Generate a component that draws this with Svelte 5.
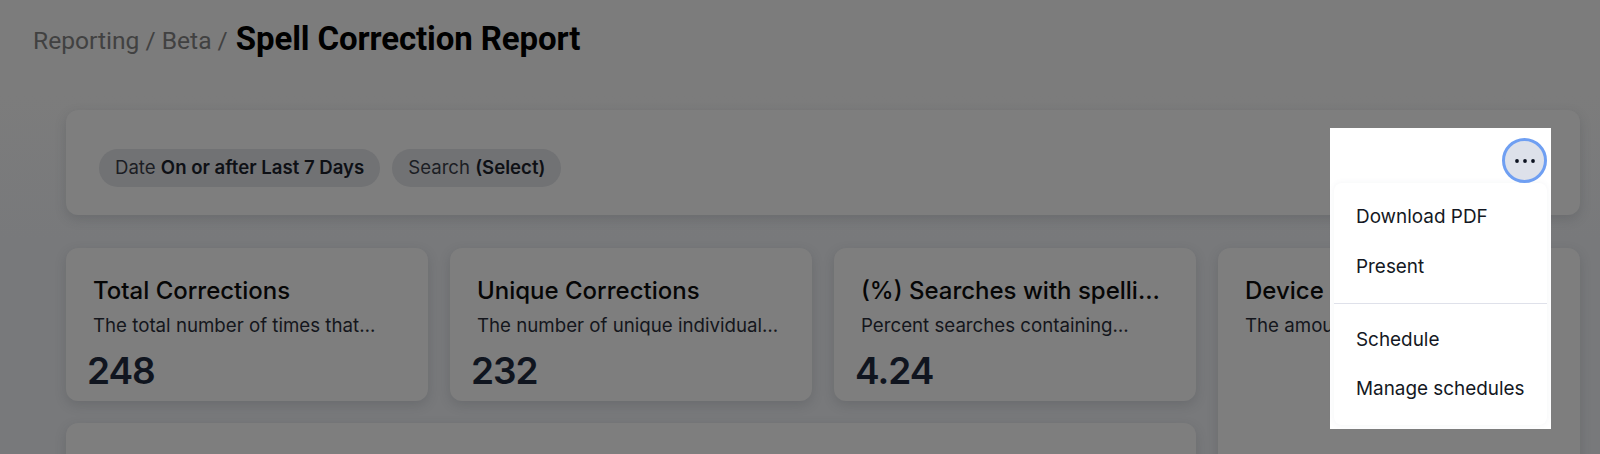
<script>
  const tiles = [
    { title: 'Total Corrections', desc: 'The total number of times that…', value: '248' },
    { title: 'Unique Corrections', desc: 'The number of unique individual…', value: '232' },
    { title: '(%) Searches with spelli…', desc: 'Percent searches containing…', value: '4.24' }
  ];
</script>

<div class="page">
  <header class="crumbs">
    <span class="trail">Reporting / Beta /</span>
    <h1>Spell Correction Report</h1>
  </header>

  <main class="dash">
    <section class="filters card">
      <div class="chip"><span>Date <b>On or after Last 7 Days</b></span></div>
      <div class="chip"><span>Search <b>(Select)</b></span></div>
    </section>

    <div class="grid">
      {#each tiles as t}
        <article class="card tile">
          <h2>{t.title}</h2>
          <p>{t.desc}</p>
          <div class="value">{t.value}</div>
        </article>
      {/each}
      <article class="card tile device">
        <h2>Device</h2>
        <p>The amou</p>
      </article>
      <article class="card wide"></article>
    </div>
  </main>

  <aside class="popup">
    <div class="bar">
      <button class="more" aria-label="More">
        <svg width="22" height="6" viewBox="0 0 22 6"><circle cx="3" cy="3" r="1.9"/><circle cx="11" cy="3" r="1.9"/><circle cx="19" cy="3" r="1.9"/></svg>
      </button>
    </div>
    <nav class="menu">
      <div class="group">
        <div class="item">Download PDF</div>
        <div class="item">Present</div>
      </div>
      <div class="group last">
        <div class="item">Schedule</div>
        <div class="item">Manage schedules</div>
      </div>
    </nav>
  </aside>
</div>

<style>
  :global(body) { margin: 0; background: #78797b; }
  .page {
    position: relative;
    width: 1600px;
    height: 454px;
    overflow: hidden;
    box-sizing: border-box;
    background: linear-gradient(#7c7c7c 0, #7c7c7c 95px, #78797b 240px);
    font-family: Inter, "Liberation Sans", sans-serif;
  }
  .crumbs {
    display: flex;
    align-items: flex-start;
    gap: 8px;
    padding: 19px 0 0 33px;
    height: 91px;
    box-sizing: border-box;
    font-family: Roboto, "Liberation Sans", sans-serif;
    line-height: 40px;
  }
  .trail { font-size: 24.6px; color: #414141; line-height: 44px; }
  h1 { margin: 0; font-size: 33px; font-weight: 700; color: #000; letter-spacing: -0.1px; }
  .dash {
    padding: 19px 20px 0 66px;
    display: flex;
    flex-direction: column;
    gap: 33px;
  }
  .card {
    background: #7e7e7e;
    border-radius: 12px;
    box-shadow: 0 4px 12px rgba(50, 55, 60, 0.2);
  }
  .filters {
    height: 105px;
    box-sizing: border-box;
    display: flex;
    align-items: center;
    gap: 12px;
    padding: 11px 33px 0;
  }
  .chip {
    height: 38px;
    box-sizing: border-box;
    padding: 0 16px 2px;
    display: flex;
    align-items: center;
    border-radius: 19px;
    background: #717274;
    color: #1c1e24;
    font-size: 18.6px;
    white-space: nowrap;
  }
  .chip b { font-weight: 600; color: #0e1015; }
  .grid {
    display: grid;
    grid-template-columns: repeat(4, 1fr);
    grid-template-rows: 153px 200px;
    gap: 22px 22px;
  }
  .tile {
    box-sizing: border-box;
    padding: 28px 27px 0;
    min-width: 0;
    display: flex;
    flex-direction: column;
  }
  h2 {
    margin: 0;
    font-size: 24px;
    line-height: 30px;
    font-weight: 500;
    color: #060606;
    white-space: nowrap;
  }
  .tile p {
    margin: 8px 0 0;
    font-size: 18.7px;
    line-height: 24px;
    height: 24px;
    color: #14161c;
    white-space: nowrap;
  }
  .value {
    margin: 11px 0 0 -6px;
    font-size: 37px;
    line-height: 44px;
    font-weight: 600;
    letter-spacing: -1px;
    color: #10151f;
  }
  .device { grid-column: 4; grid-row: 1 / span 2; }
  .wide { grid-column: 1 / span 3; grid-row: 2; }

  .popup {
    position: absolute;
    left: 1330px;
    top: 128px;
    width: 221px;
    height: 301px;
    box-sizing: border-box;
    background: #fff;
    padding: 55px 4px 4px;
  }
  .bar { position: absolute; top: 10px; right: 4px; }
  .more {
    display: block;
    width: 45px;
    height: 45px;
    padding: 0;
    box-sizing: border-box;
    border: 3px solid #6f9ff2;
    border-radius: 50%;
    background: #dde1ea;
    line-height: 0;
  }
  .more svg { display: block; margin: auto; fill: #0c1220; }
  .menu {
    height: 242px;
    box-sizing: border-box;
    border-radius: 8px;
    background: #fff;
    box-shadow: 0 0 6px rgba(90, 100, 130, 0.07);
    font-size: 18.9px;
    color: #141823;
  }
  .group { padding: 8px 0 8px; }
  .group:first-child { height: 121px; box-sizing: border-box; padding-top: 9px; border-bottom: 1px solid #dfe1ea; }
  .group:first-child .item + .item { margin-top: 1px; }
  .group.last { padding-top: 11px; }
  .item {
    height: 49px;
    padding-left: 22px;
    display: flex;
    align-items: center;
  }
</style>
